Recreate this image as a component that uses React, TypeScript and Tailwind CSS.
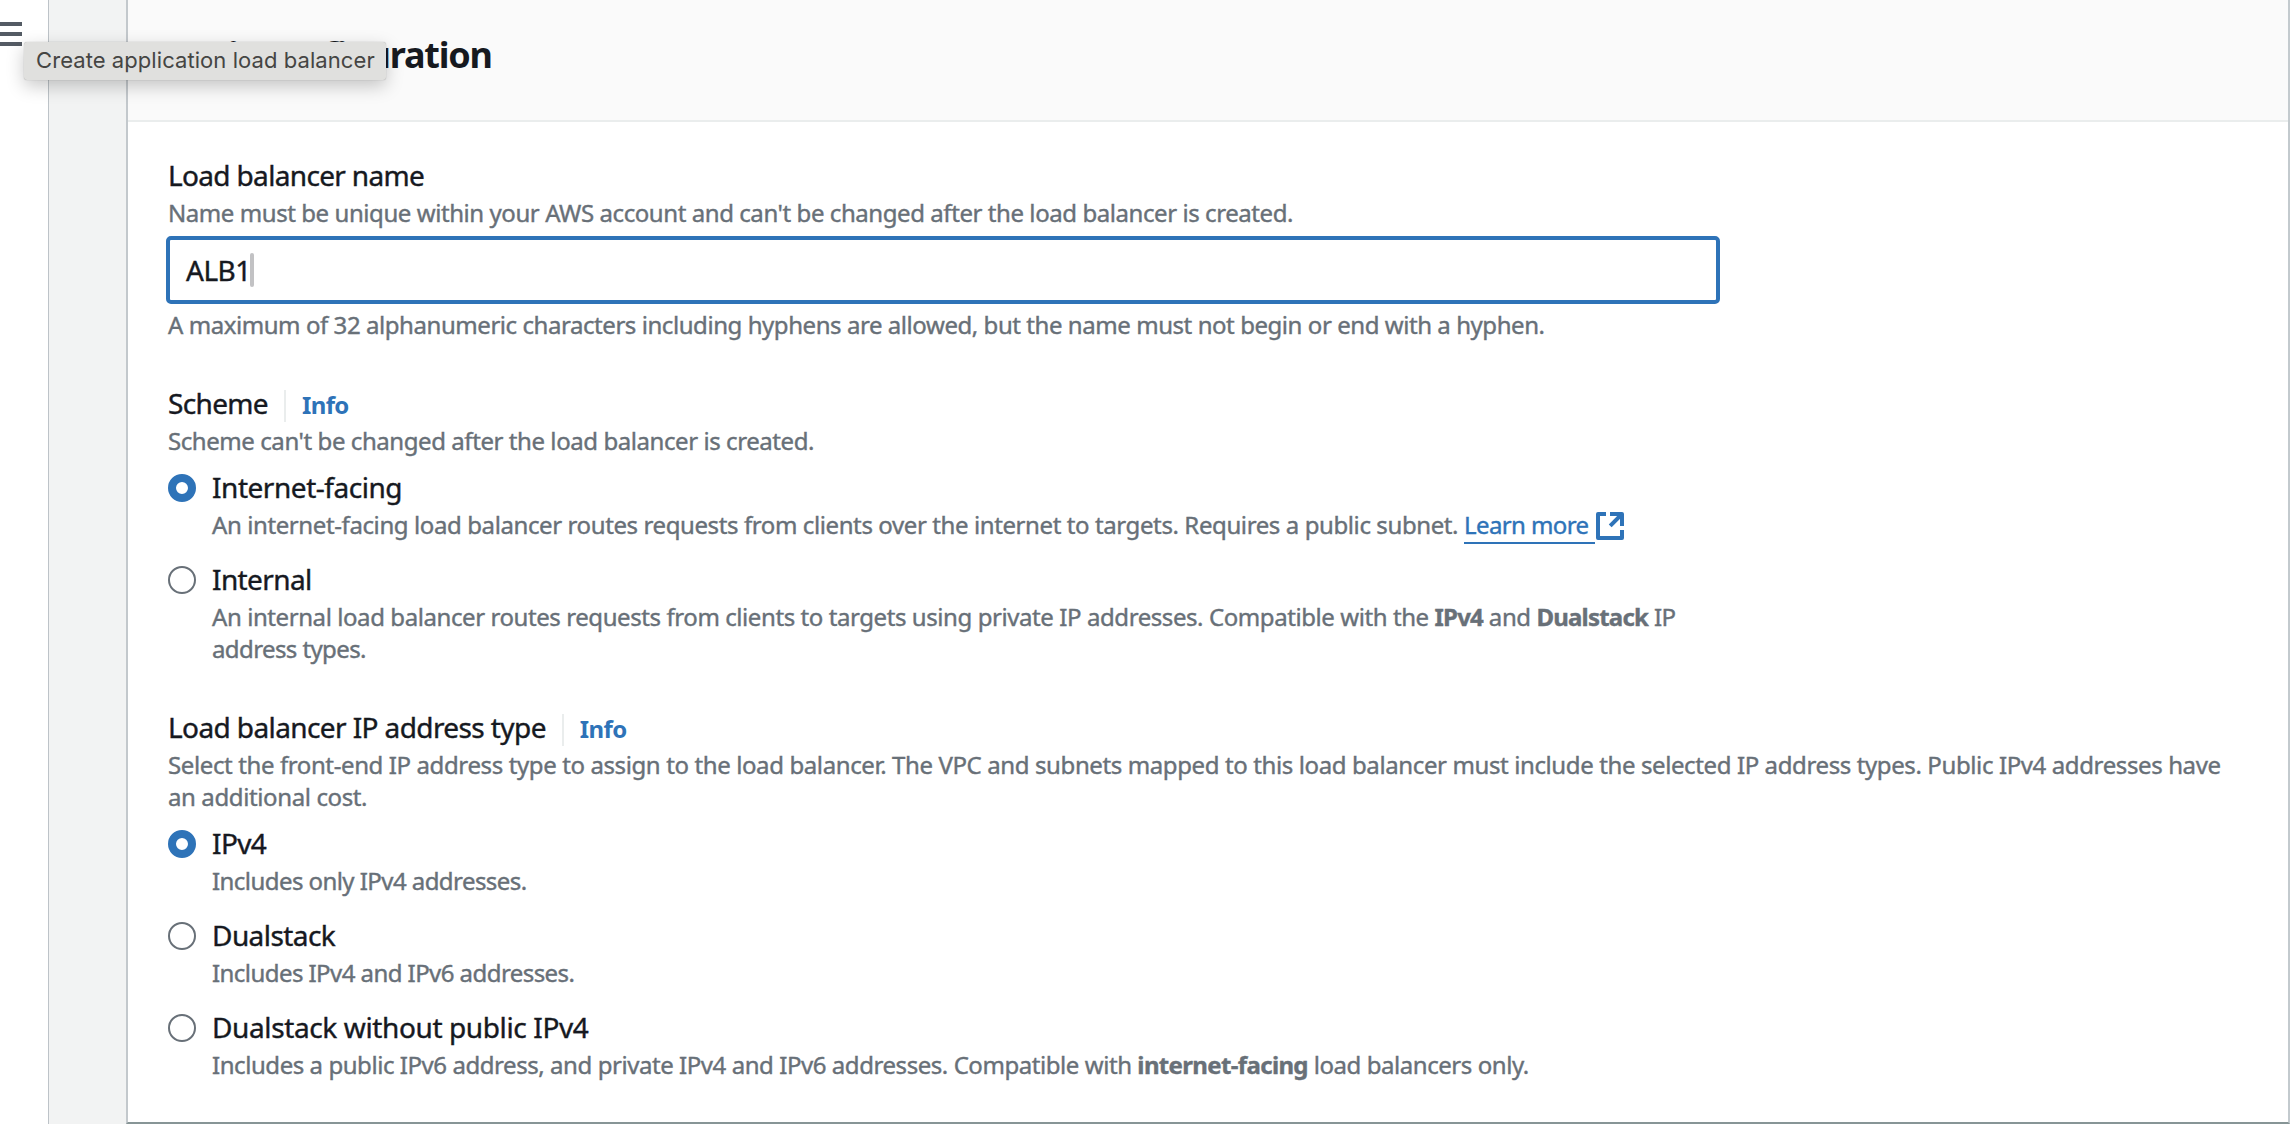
import React, { ReactNode } from "react";

function Label({ children, className = "tracking-[-0.66px]" }: { children: ReactNode; className?: string }) {
  return (
    <div className={`text-[28px] leading-[36px] whitespace-nowrap text-[#16191f] [-webkit-text-stroke:0.4px_#16191f] ${className}`}>
      {children}
    </div>
  );
}

function Description({ children, className = "tracking-[-0.43px]" }: { children: ReactNode; className?: string }) {
  return (
    <div className={`mt-1 text-2xl leading-[32px] whitespace-nowrap text-[#687078] [-webkit-text-stroke:0.4px_#687078] ${className}`}>
      {children}
    </div>
  );
}

function InfoLabel({ children, className }: { children: ReactNode; className?: string }) {
  return (
    <div className="flex h-9">
      <Label className={className}>{children}</Label>
      <div className="mt-[5px] ml-4 h-8 w-[2px] bg-[#eaeded]" />
      <a className="ml-4 text-2xl leading-[39px] font-bold tracking-[-0.6px] text-[#2e73b8]">Info</a>
    </div>
  );
}

function RadioOption({
  label,
  labelClass,
  checked = false,
  children,
  className,
}: {
  label: string;
  labelClass?: string;
  checked?: boolean;
  children: ReactNode;
  className?: string;
}) {
  return (
    <div className="flex gap-4">
      <div
        className={
          checked
            ? "mt-[5px] size-7 shrink-0 rounded-full border-8 border-[#2e73b8] bg-white"
            : "mt-[5px] size-7 shrink-0 rounded-full border-2 border-[#687078] bg-white"
        }
      />
      <div>
        <Label className={labelClass}>{label}</Label>
        <Description className={className}>{children}</Description>
      </div>
    </div>
  );
}

function ExternalIcon() {
  return (
    <svg viewBox="0 0 28 28" className="ml-px inline-block size-7 align-[-6px]" fill="none" stroke="#2e73b8" strokeWidth="4" strokeLinejoin="round">
      <path d="M10 2H2V26H26V18" />
      <path d="M14 2H26V14" />
      <path d="M25.5 2.5L14.2 13.8" />
    </svg>
  );
}

export default function App() {
  return (
    <div className="relative flex h-[1124px] w-[2290px] overflow-hidden bg-[#f2f3f3] font-['Noto_Sans',sans-serif]">
      <aside className="w-[49px] shrink-0 border-r border-[#bdc3c8] bg-white pt-[22px]">
        <div className="flex w-[22px] flex-col gap-[6px]">
          <div className="h-1 bg-[#545b64]" />
          <div className="h-1 bg-[#545b64]" />
          <div className="h-1 bg-[#545b64]" />
        </div>
      </aside>

      <main className="ml-[77px] flex-1 border-r-2 border-b-2 border-l-2 border-r-[#c3cace] border-b-[#879596] border-l-[#c3c8cc] bg-white">
        <header className="h-[122px] border-b-2 border-[#eaeded] bg-[#fafafa] pt-[31px] pl-10">
          <h2 className="text-4xl leading-[48px] font-bold tracking-[-1.22px] text-[#16191f]">Basic configuration</h2>
        </header>

        <div className="flex flex-col gap-11 pt-[35px] pl-10">
          <section>
            <Label>Load balancer name</Label>
            <Description>Name must be unique within your AWS account and can't be changed after the load balancer is created.</Description>
            <div className="mt-[7px] mb-[5px] -ml-[2px] flex h-[68px] w-[1554px] items-center rounded-[5px] border-4 border-[#2e73b8] bg-white pl-4">
              <span className="text-[28px] tracking-[-0.5px] text-[#16191f] [-webkit-text-stroke:0.4px_#16191f]">ALB1</span>
              <span className="-ml-px h-[34px] w-1 rounded-sm bg-[#c2c2c4]" />
            </div>
            <Description className="tracking-[-0.44px]">
              A maximum of 32 alphanumeric characters including hyphens are allowed, but the name must not begin or end with a hyphen.
            </Description>
          </section>

          <section>
            <InfoLabel>Scheme</InfoLabel>
            <Description>Scheme can't be changed after the load balancer is created.</Description>
            <div className="mt-3 flex flex-col gap-5">
              <RadioOption label="Internet-facing" labelClass="tracking-[-0.46px]" checked className="tracking-[-0.397px]">
                An internet-facing load balancer routes requests from clients over the internet to targets. Requires a public subnet.{" "}
                <a className="text-[#2e73b8] [-webkit-text-stroke:0.4px_#2e73b8]">
                  <span className="-mb-[3px] inline-block h-[35px] w-[131px] border-b-2 border-[#2e73b8] align-top tracking-[-0.6px]">
                    Learn more
                  </span>
                  <ExternalIcon />
                </a>
              </RadioOption>
              <RadioOption label="Internal" labelClass="tracking-[-0.6px]" className="tracking-[-0.42px]">
                An internal load balancer routes requests from clients to targets using private IP addresses. Compatible with the{" "}
                <b className="tracking-[-0.8px]">IPv4</b> and <b className="tracking-[-0.8px]">Dualstack</b> IP
                <br />
                <span className="tracking-[-0.6px]">address types.</span>
              </RadioOption>
            </div>
          </section>

          <section>
            <InfoLabel className="tracking-[-0.6px]">Load balancer IP address type</InfoLabel>
            <Description className="tracking-[-0.387px]">
              Select the front-end IP address type to assign to the load balancer. The VPC and subnets mapped to this load balancer must
              include the selected IP address types. Public IPv4 addresses have
              <br />
              an additional cost.
            </Description>
            <div className="mt-3 flex flex-col gap-5">
              <RadioOption label="IPv4" labelClass="tracking-[-0.6px]" checked className="tracking-[-0.56px]">
                Includes only IPv4 addresses.
              </RadioOption>
              <RadioOption label="Dualstack" labelClass="tracking-[-0.56px]" className="tracking-[-0.56px]">
                Includes IPv4 and IPv6 addresses.
              </RadioOption>
              <RadioOption label="Dualstack without public IPv4" labelClass="tracking-[-0.38px]" className="tracking-[-0.44px]">
                Includes a public IPv6 address, and private IPv4 and IPv6 addresses. Compatible with{" "}
                <b className="tracking-[-0.65px]">internet-facing</b> load balancers only.
              </RadioOption>
            </div>
          </section>
        </div>
      </main>

      <div
        role="tooltip"
        className="absolute top-[42px] left-[24px] h-[38px] w-[362px] rounded-[3px] bg-[#e0e0de] pl-3 font-['Inter',sans-serif] text-[22px] leading-[37px] tracking-[0.07px] whitespace-nowrap text-[#454543] shadow-[0_0_1px_rgba(0,0,0,0.35),0_6px_18px_rgba(0,0,0,0.22)]"
      >
        Create application load balancer
      </div>
    </div>
  );
}
